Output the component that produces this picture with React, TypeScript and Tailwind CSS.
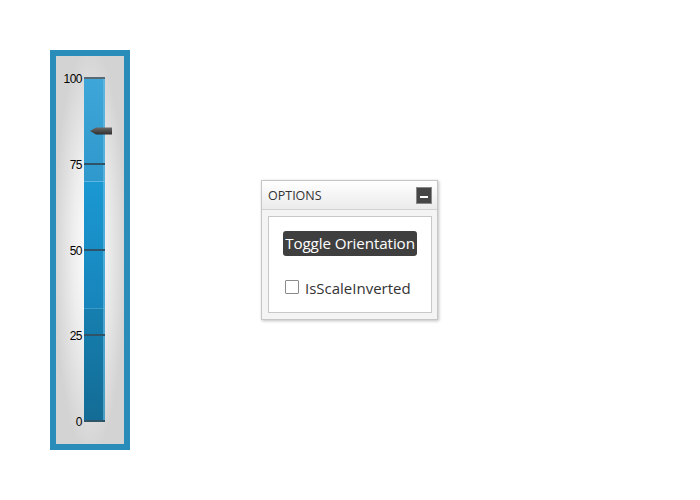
import { useState } from "react";

const ticks = [100, 75, 50, 25, 0];

const Gauge = () => (
    <div className="w-[80px] h-[400px] bg-[#2a8cb8] p-[6px]">
        <div className="relative h-full w-full bg-[radial-gradient(ellipse_at_center,#ffffff_0%,#eeeeee_35%,#d3d3d3_75%)] pt-[16px] pl-[6px] flex">
            {/* labels */}
            <div className="flex flex-col justify-between items-end w-[20px] h-[357px] text-[12px] leading-[14px] text-black font-['Liberation_Sans',sans-serif] tracking-[-0.5px]">
                {ticks.map((t) => (
                    <span key={t}>{t}</span>
                ))}
            </div>
            {/* bar */}
            <div className="relative ml-[2px] mt-[6px] w-[21px] h-[343px] flex flex-col">
                <div className="h-[103px] bg-gradient-to-b from-[#3ea6d8] to-[#2f98cc]" />
                <div className="h-px bg-[#5cb8e2]" />
                <div className="h-[126px] bg-gradient-to-b from-[#1b98d2] to-[#1785bb]" />
                <div className="h-px bg-[#3a9bc7]" />
                <div className="flex-1 bg-gradient-to-b from-[#167fb0] to-[#136c95]" />
                <div className="absolute right-0 top-0 bottom-0 w-[2px] bg-[#6fc0e4] opacity-60" />
                {ticks.map((t, i) => (
                    <div
                        key={t}
                        className={`absolute left-0 w-full h-[2px] ${i === 0 ? "bg-[#5a6a74]" : "bg-[#2f5468]"}`}
                        style={{ top: `${i * 85.75 - 1}px` }}
                    />
                ))}
                {/* pointer */}
                <svg className="absolute left-[6px] top-[49px]" width="22" height="8" viewBox="0 0 22 8">
                    <defs>
                        <linearGradient id="ptr" x1="0" y1="0" x2="0" y2="1">
                            <stop offset="0" stopColor="#6a6a6a" />
                            <stop offset="1" stopColor="#2e2e2e" />
                        </linearGradient>
                    </defs>
                    <path d="M0 4 L6 0.5 L22 0.5 L22 7.5 L6 7.5 Z" fill="url(#ptr)" />
                </svg>
            </div>
        </div>
    </div>
);

const OptionsPanel = () => {
    const [checked, setChecked] = useState(false);
    return (
        <div className="w-[177px] h-[140px] border border-[#c6c6c6] bg-[#f4f4f4] shadow-[1px_1px_3px_rgba(0,0,0,0.25)] flex flex-col font-['Open_Sans',sans-serif]">
            <div className="h-[29px] shrink-0 flex items-center justify-between pl-[6px] pr-[5px] bg-gradient-to-b from-white to-[#ebebeb] border-b border-[#d2d2d2]">
                <span className="text-[12.5px] text-[#333] mt-[3px]">OPTIONS</span>
                <button className="w-[16px] h-[17px] bg-[#464646] border border-[#888] flex items-center justify-center">
                    <span className="block w-[8px] h-[2px] bg-white mt-[3px]" />
                </button>
            </div>
            <div className="flex-1 p-[6px] pb-[6px]">
                <div className="h-[97px] w-[164px] border border-[#c8c8c8] bg-white flex flex-col items-center pt-[14px]">
                    <button className="h-[25px] px-[2px] rounded-[3px] bg-[#3f3f3f] text-white text-[15.2px] leading-none tracking-[-0.1px]">
                        Toggle Orientation
                    </button>
                    <label className="self-start ml-[16px] mt-[21px] flex items-center gap-[6px] text-[15px] text-[#333]">
                        <span
                            onClick={() => setChecked(!checked)}
                            className="w-[14px] h-[14px] border border-[#8a8a8a] bg-white rounded-[1px] -mt-[2px]"
                        />
                        IsScaleInverted
                    </label>
                </div>
            </div>
        </div>
    );
};

const App = () => {
    return (
        <div className="w-[700px] h-[500px] bg-white flex items-start pt-[50px] pl-[50px]">
            <Gauge />
            <div className="ml-[131px] mt-[130px]">
                <OptionsPanel />
            </div>
        </div>
    );
};

export default App;
